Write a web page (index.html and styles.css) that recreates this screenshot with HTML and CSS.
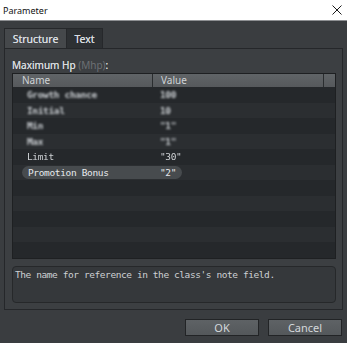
FILE: index.html
```html
<!DOCTYPE html>
<html lang="en">
<head>
  <meta charset="UTF-8" />
  <title>Parameter</title>
  <link rel="stylesheet" href="styles.css">
</head>
<body>
  <div class="titlebar">
    <span class="title">Parameter</span>
    <svg class="close" width="10" height="10" viewBox="0 0 10 10">
      <path d="M0.5 0.5 L9.5 9.5 M9.5 0.5 L0.5 9.5" stroke="#1a1a1a" stroke-width="1" fill="none" />
    </svg>
  </div>

  <div class="dialog">
    <div class="tabs">
      <div class="tab active">Structure</div>
      <div class="tab">Text</div>
    </div>

    <div class="panel">
      <div class="field-label">Maximum Hp <span class="dim">(Mhp)</span>:</div>

      <div class="table">
        <div class="thead">
          <div class="th th-name">Name</div>
          <div class="th th-value">Value</div>
          <div class="th th-fill"></div>
        </div>
        <div class="tbody">
          <div class="row"><span class="name blur">Growth chance</span><span class="value blur">100</span></div>
          <div class="row"><span class="name blur">Initial</span><span class="value blur">10</span></div>
          <div class="row"><span class="name blur">Min</span><span class="value blur">"1"</span></div>
          <div class="row"><span class="name blur">Max</span><span class="value blur">"1"</span></div>
          <div class="row"><span class="name soft">Limit</span><span class="value soft">"30"</span></div>
          <div class="row selected">
            <span class="pill"><span class="name">Promotion Bonus</span><span class="value">"2"</span></span>
          </div>
          <div class="row"></div>
          <div class="row"></div>
          <div class="row"></div>
          <div class="row"></div>
          <div class="row"></div>
        </div>
      </div>

      <div class="desc">The name for reference in the class's note field.</div>
    </div>

    <div class="buttons">
      <div class="btn">OK</div>
      <div class="btn">Cancel</div>
    </div>
  </div>
</body>
</html>
```

FILE: styles.css
```css
body {
  margin: 0;
  width: 347px;
  height: 343px;
  overflow: hidden;
  background: #3a3d40;
  font-family: "Noto Sans", "Liberation Sans", sans-serif;
  color: #d6dadd;
}

.titlebar {
  height: 20px;
  background: #ffffff;
  border-bottom: 1px solid #8e9093;
  display: flex;
  align-items: center;
  justify-content: space-between;
  padding: 0 4px 0 3px;
}
.title {
  font-size: 9px;
  color: #111;
}
.close {
  margin-right: 1px;
}

.dialog {
  padding: 7px 4px 0 4px;
}

.tabs {
  display: flex;
  height: 20px;
}
.tab {
  display: flex;
  align-items: center;
  justify-content: center;
  font-size: 10.5px;
  color: #d8dce0;
  text-shadow: 0 0 0.4px #d8dce0;
  border: 1px solid #26282b;
  border-bottom: none;
  background: #2d3033;
  width: 35px;
}
.tab.active {
  width: 61px;
  background: #45484b;
  border-right: none;
}

.panel {
  border: 1px solid #25272a;
  background: #3c3f42;
  padding: 8px 6px 6px 7px;
}

.field-label {
  height: 16px;
  line-height: 16px;
  font-size: 10px;
  color: #d6dadd;
  text-shadow: 0 0 0.4px #d6dadd;
}
.dim {
  color: #6c7074;
  text-shadow: none;
}

.table {
  border: 1px solid #1e2022;
  background: #26292c;
}
.thead {
  display: flex;
  height: 13px;
  background: linear-gradient(#606467, #56595c);
}
.th {
  font-size: 10px;
  line-height: 13px;
  color: #cfd3d6;
}
.th-name {
  width: 130px;
  padding-left: 9px;
  border-right: 1px solid #2a2d2f;
}
.th-value {
  width: 162px;
  padding-left: 8px;
  border-right: 1px solid #2a2d2f;
}
.th-fill {
  flex: 1;
}

.row {
  height: 15.5px;
  display: flex;
  align-items: center;
  font-family: "DejaVu Sans Mono", "Liberation Mono", monospace;
  font-size: 9.5px;
  letter-spacing: -0.35px;
  color: #d2d5d8;
  background: #25282b;
}
.row:nth-child(even) {
  background: #2b2e31;
}
.row .name {
  width: 133px;
  padding-left: 14px;
}
.blur {
  filter: blur(0.8px);
  font-weight: bold;
  color: #c8ccd0;
}
.soft {
  filter: blur(0.3px);
  color: #cfd2d5;
}
.row.selected {
  padding-left: 9px;
}
.pill {
  display: flex;
  align-items: center;
  height: 13px;
  background: #474b4e;
  border-radius: 7px;
  padding: 0 6px;
  color: #e6e9ec;
}
.pill .name {
  width: 132px;
  padding-left: 0;
}

.desc {
  margin-top: 7px;
  height: 33px;
  border: 1px solid #26282a;
  border-radius: 4px;
  background: #35383b;
  padding: 1px 2px;
  font-family: "DejaVu Sans Mono", "Liberation Mono", monospace;
  font-size: 9.5px;
  letter-spacing: -0.42px;
  line-height: 14px;
  color: #cdd0d3;
}

.buttons {
  display: flex;
  justify-content: flex-end;
  gap: 9px;
  margin-top: 9px;
  margin-right: 1px;
}
.btn {
  width: 72px;
  height: 15px;
  border: 1px solid #222426;
  background: linear-gradient(#5e6265, #54585b);
  font-size: 11px;
  line-height: 15px;
  text-align: center;
  color: #d4d8dc;
}
```
